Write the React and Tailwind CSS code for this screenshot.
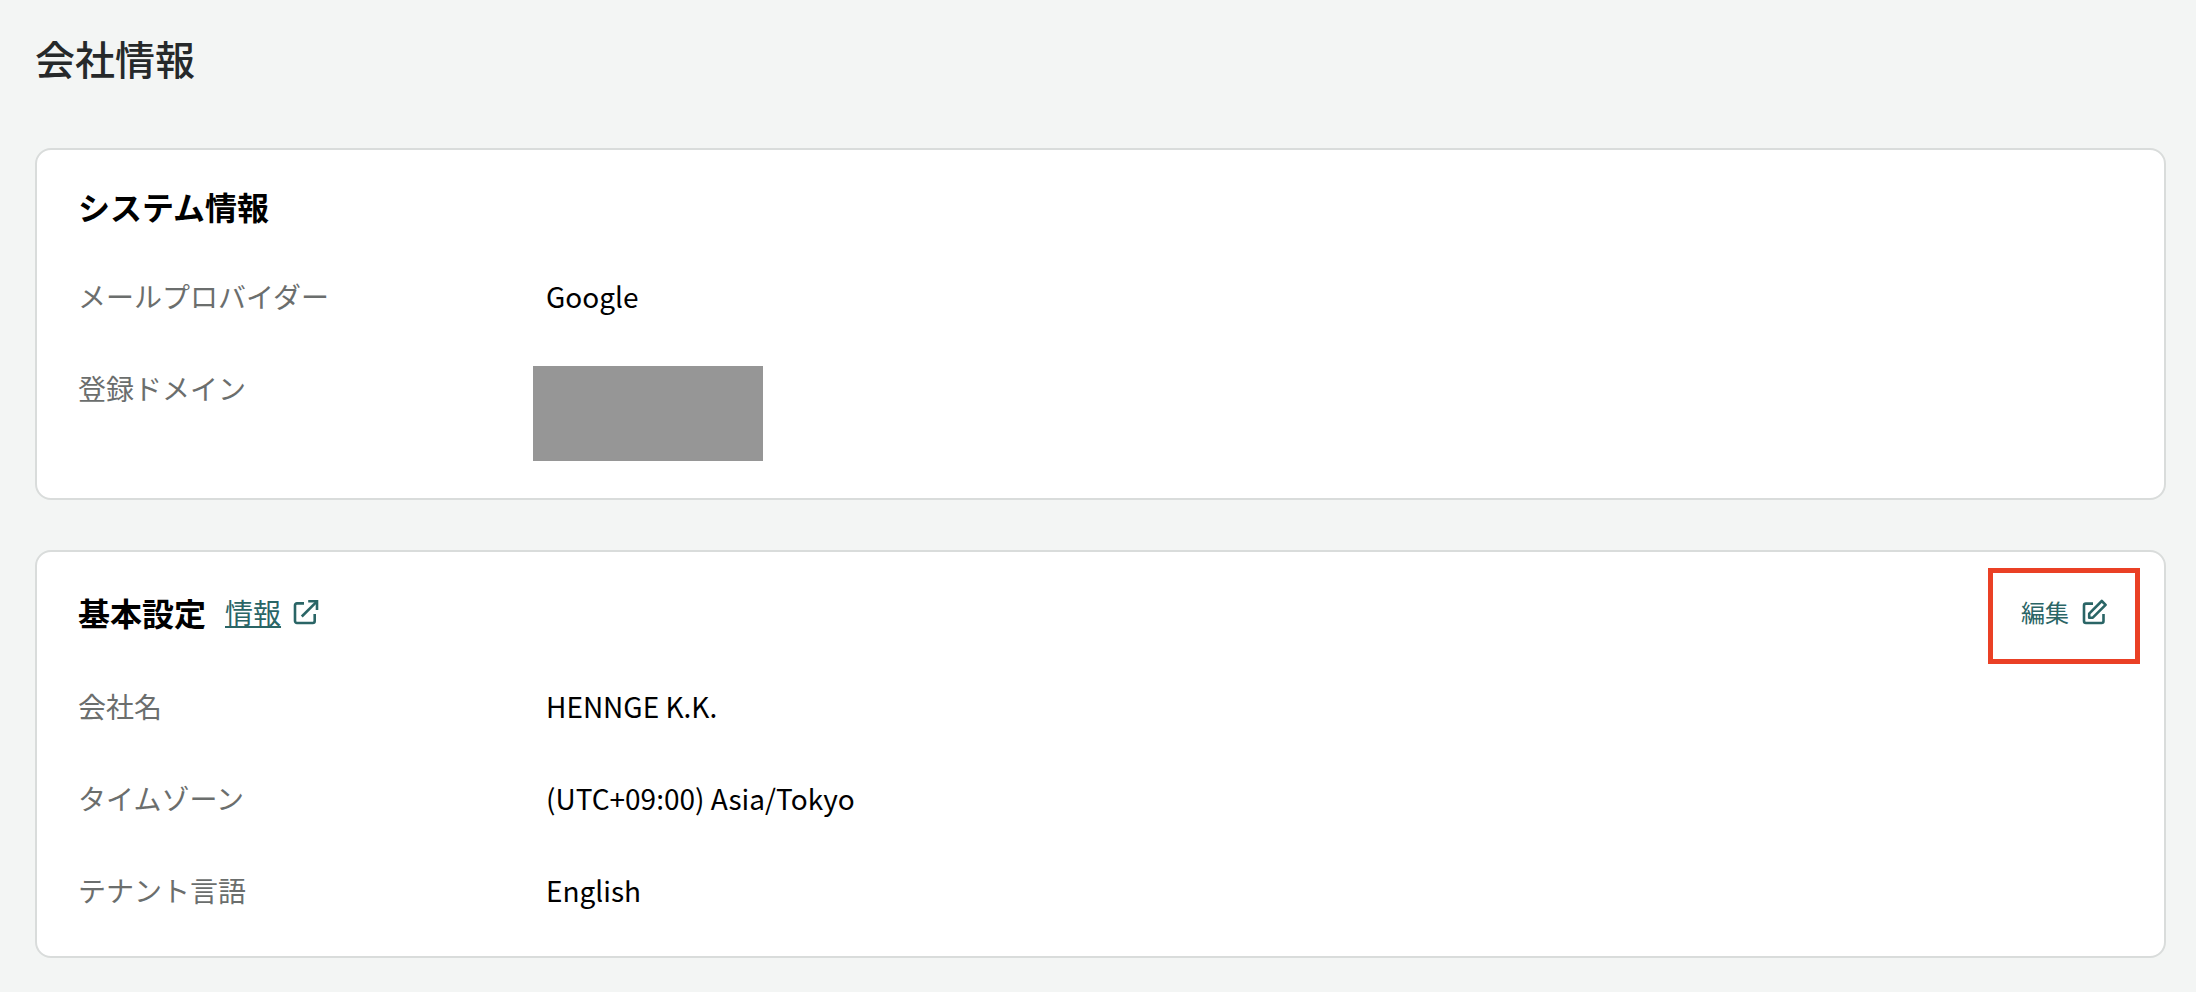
function ExternalLinkIcon() {
  return (
    <svg className="size-[26px]" viewBox="0 0 26 26" fill="none" stroke="currentColor" strokeWidth="2.6" aria-hidden="true">
      <path d="M11 4.4H3.9A1.9 1.9 0 0 0 2 6.3V22.1A1.9 1.9 0 0 0 3.9 24H19.8A1.9 1.9 0 0 0 21.7 22.1V15" />
      <path d="M15.2 2.3H24V11" />
      <path d="M24 2.3L8.8 17.5" />
    </svg>
  );
}

function EditIcon() {
  return (
    <svg className="size-[26px]" viewBox="0 0 26 26" fill="none" stroke="currentColor" strokeWidth="2.6" aria-hidden="true">
      <path d="M12 4.6H4.9A1.9 1.9 0 0 0 3 6.5V22.1A1.9 1.9 0 0 0 4.9 24H20.6A1.9 1.9 0 0 0 22.5 22.1V15" />
      <path d="M8.2 18.7V14.6L20.8 2L24.6 5.8L11.8 18.7Z" strokeLinejoin="round" />
    </svg>
  );
}

function Card({ children }) {
  return (
    <section className="rounded-2xl border-2 border-[#d9dcdb] bg-white px-[41px] pt-8 pb-11">
      {children}
    </section>
  );
}

function Row({ label, children }) {
  return (
    <div className="flex text-[28px] leading-[44px]">
      <dt className="w-[468px] shrink-0 text-[#6b6e6d]">{label}</dt>
      <dd className="min-w-0 flex-1 text-black">{children}</dd>
    </div>
  );
}

export default function App() {
  return (
    <main
      lang="ja"
      className="min-h-screen bg-[#f3f5f4] pt-7 pr-[30px] pb-8 pl-[35px] font-['Noto_Sans_CJK_JP',sans-serif]"
    >
      <h1 className="mb-[60px] text-[40px] leading-[60px] font-medium text-[#26292a]">会社情報</h1>

      <div className="flex flex-col gap-[50px]">
        <Card>
          <h2 className="mb-11 text-[32px] leading-[48px] font-bold text-black">システム情報</h2>
          <dl className="flex flex-col gap-12">
            <Row label="メールプロバイダー">Google</Row>
            <Row label="登録ドメイン">
              <div className="relative h-[88px]">
                {/* domain names are masked */}
                <span className="absolute top-0 -left-[13px] h-[95px] w-[230px] bg-[#969696]" />
              </div>
            </Row>
          </dl>
        </Card>

        <Card>
          <div className="mb-11 flex h-14 items-center justify-between">
            <div className="flex items-center gap-[19px]">
              <h2 className="text-[32px] leading-[48px] font-bold text-black">基本設定</h2>
              <a href="#info" className="flex items-center gap-3 text-[28px] leading-[44px] text-[#2a6566]">
                <span className="underline underline-offset-2">情報</span>
                <ExternalLinkIcon />
              </a>
            </div>
            <button type="button" className="relative mr-4 flex cursor-pointer items-center gap-3 text-2xl text-[#2a6566]">
              編集
              <EditIcon />
              <span className="absolute -inset-x-[33px] -top-7 -bottom-9 border-[5px] border-[#ea4025]" />
            </button>
          </div>
          <dl className="flex flex-col gap-12">
            <Row label="会社名">HENNGE K.K.</Row>
            <Row label="タイムゾーン">(UTC+09:00) Asia/Tokyo</Row>
            <Row label="テナント言語">English</Row>
          </dl>
        </Card>
      </div>
    </main>
  );
}
